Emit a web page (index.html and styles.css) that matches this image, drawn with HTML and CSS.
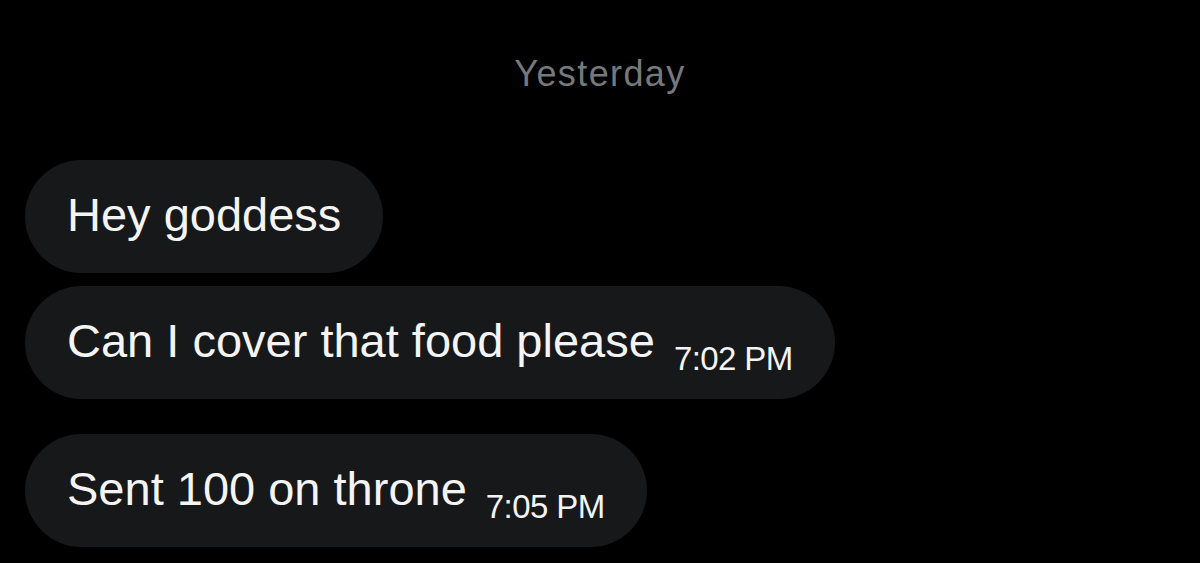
FILE: index.html
```html
<!DOCTYPE html>
<html lang="en">
<head>
    <meta charset="UTF-8">
    <meta name="viewport" content="width=device-width, initial-scale=1.0">
    <title>Messages</title>
    <link rel="stylesheet" href="styles.css">
</head>
<body>

<div id="conversation">
    <div class="day">Yesterday</div>

    <div class="bubble">Hey goddess</div>
    <div class="bubble">Can I cover that food please<span class="time">7:02 PM</span></div>
    <div class="bubble last">Sent 100 on throne<span class="time">7:05 PM</span></div>
</div>

</body>
</html>
```

FILE: styles.css
```css
body {
    margin: 0;
    padding: 0;
    background-color: #000;
    font-family: "Liberation Sans", Arial, sans-serif;
    color: #f4f4f4;
    height: 100vh;
    overflow: hidden;
}

#conversation {
    display: flex;
    flex-direction: column;
    align-items: flex-start;
    padding: 0 25px;
}

.day {
    align-self: stretch;
    text-align: center;
    color: #76797c;
    font-size: 36px;
    line-height: 1;
    letter-spacing: 1.4px;
    padding-top: 56px;
    margin-bottom: 68px;
}

.bubble {
    box-sizing: border-box;
    height: 113px;
    padding: 31px 42px 0 42px;
    border-radius: 57px;
    background-color: #17181a;
    font-size: 47px;
    line-height: 1;
    white-space: nowrap;
    margin-bottom: 13px;
}

.bubble.last {
    margin-top: 22px;
}

.time {
    font-size: 33px;
    letter-spacing: -0.6px;
    margin-left: 19px;
    vertical-align: -13px;
}
```
